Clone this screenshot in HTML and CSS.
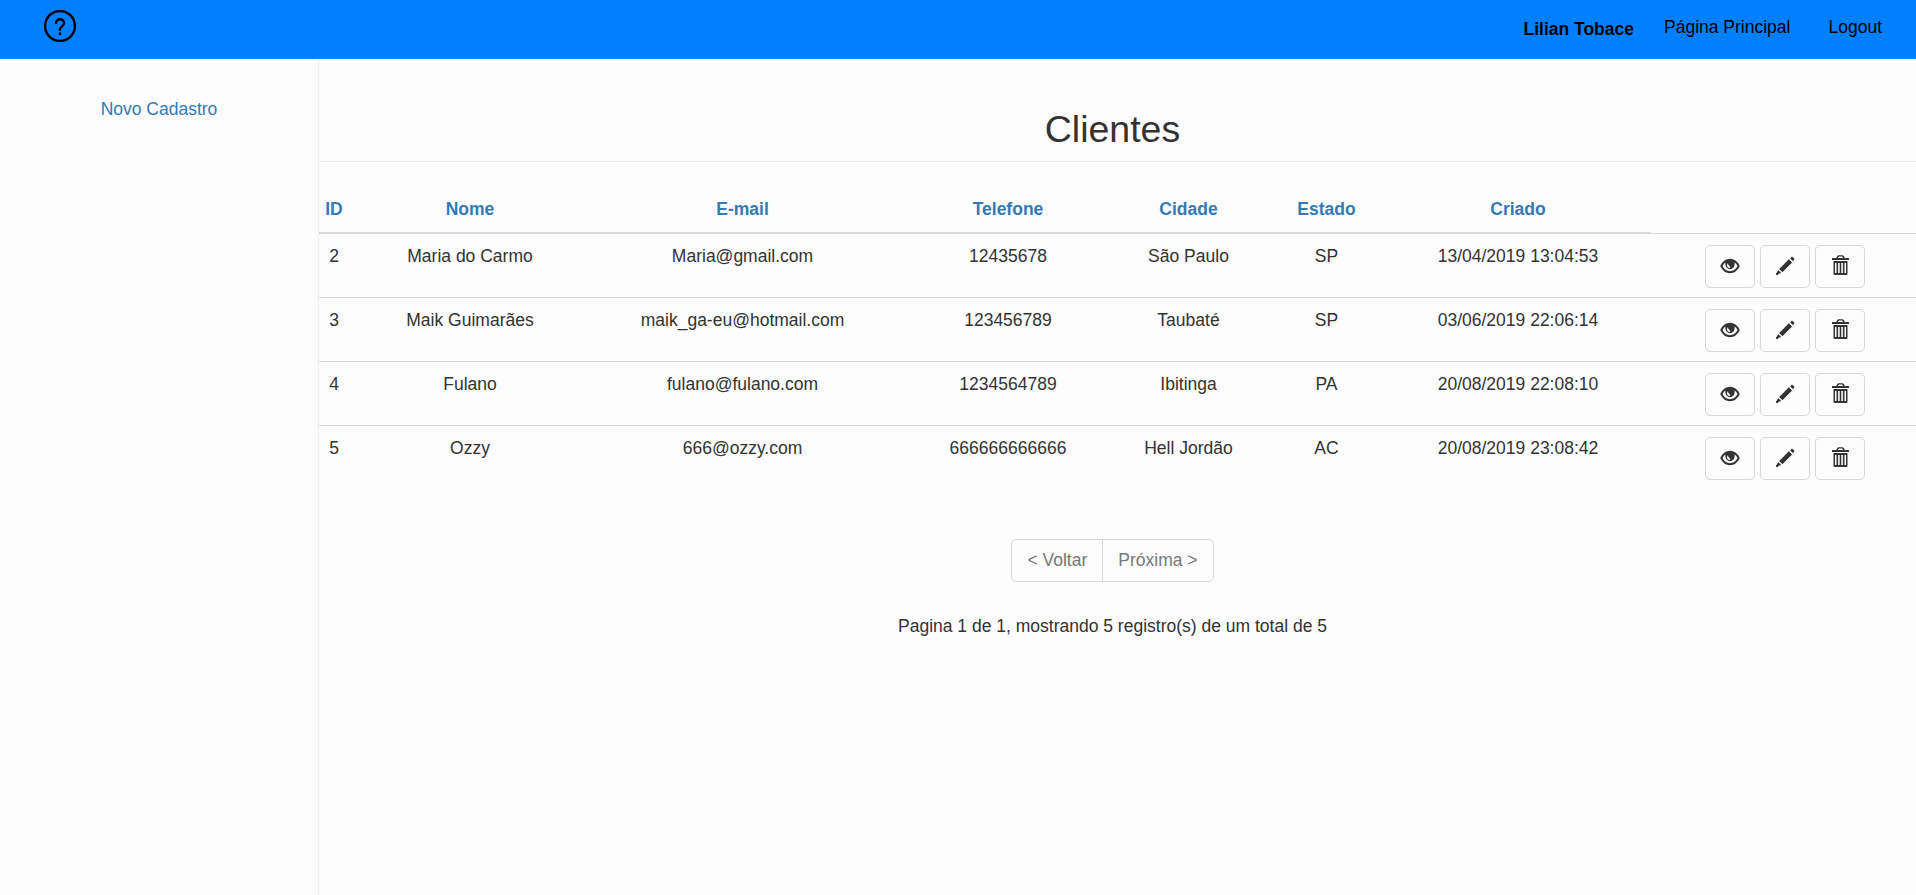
FILE: index.html
```
<!DOCTYPE html>
<html lang="pt-BR">
<head>
<meta charset="utf-8">
<title>Clientes</title>
<link rel="stylesheet" href="styles.css">
</head>
<body>
<svg class="sprite" aria-hidden="true">
  <symbol id="eye" viewBox="0 0 20 16"><path d="M1.300 8C3.300 4 6.300 1.700 10 1.700S16.700 4 18.700 8c-2 4-5 6.200-8.700 6.200S3.300 12 1.300 8z" fill="none" stroke="#333" stroke-width="1.900"/><path fill-rule="evenodd" d="M6 2.200h8A5 5 0 0 1 14.600 6.600 4.600 4.600 0 1 1 5.400 6.600 5 5 0 0 1 6 2.200zM7.500 5.200c-1 2.200-.3 4.200 1.500 4.700 1 .2 1.500-.6 1.100-1.300C9.300 7.600 8.400 7.200 7.500 5.200z"/></symbol>
  <symbol id="pencil" viewBox="0 0 20 20"><path d="M15.100 2.200 16.400 1q.7-.5 1.300.1l1.400 1.500q.5.700-.1 1.300L17.900 5.100zM13.900 3.300l3.200 3.200L7.400 16.200 4.200 13zM3.200 14l3 3-2.300.8L2.600 19H1v-1.600l1.200-1.300z"/></symbol>
  <symbol id="trash" viewBox="0 0 17 20"><path fill-rule="evenodd" d="M4.300 3Q4.900.3 6.500.3h4q1.600 0 2.200 2.700H17v2H0V3zM6 3h5L10.200 1.600H6.800zM1.500 6h14v12.800q0 1.200-1.200 1.200H2.700q-1.200 0-1.200-1.200zM3 8v10h1.500V8zm3.100 0v10h1.600V8zm3.200 0v10h1.600V8zm3.200 0v10H14V8z"/></symbol>
</svg>
<header class="navbar">
  <a class="help"><svg viewBox="0 0 32 32"><circle cx="16" cy="16" r="14.900"/><path d="M12 13.800C12 11 13.700 9.300 16 9.300s4.100 1.600 4.100 4c0 3.200-4.100 3-4.100 5.600v1.900"/><path d="M16 22.300v2.800"/></svg></a>
  <nav class="links">
    <strong class="user">Lilian Tobace</strong>
    <a class="home">Página Principal</a>
    <a>Logout</a>
  </nav>
</header>
<div class="page">
  <aside class="sidebar"><a>Novo Cadastro</a></aside>
  <main class="content">
    <h2>Clientes</h2>
    <table class="clients">
      <colgroup><col class="c-id"><col class="c-name"><col class="c-mail"><col class="c-phone"><col class="c-city"><col class="c-state"><col class="c-date"><col class="c-actions"></colgroup>
      <thead><tr><th>ID</th><th>Nome</th><th>E-mail</th><th>Telefone</th><th>Cidade</th><th>Estado</th><th class="date">Criado</th><td></td></tr></thead>
      <tbody>
        <tr><td>2</td><td>Maria do Carmo</td><td>Maria@gmail.com</td><td>12435678</td><td>São Paulo</td><td>SP</td><td class="date">13/04/2019 13:04:53</td><td><div class="actions"><a class="btn"><svg class="eye"><use href="#eye"/></svg></a><a class="btn"><svg class="pencil"><use href="#pencil"/></svg></a><a class="btn"><svg class="trash"><use href="#trash"/></svg></a></div></td></tr>
        <tr><td>3</td><td>Maik Guimarães</td><td>maik_ga-eu@hotmail.com</td><td>123456789</td><td>Taubaté</td><td>SP</td><td class="date">03/06/2019 22:06:14</td><td><div class="actions"><a class="btn"><svg class="eye"><use href="#eye"/></svg></a><a class="btn"><svg class="pencil"><use href="#pencil"/></svg></a><a class="btn"><svg class="trash"><use href="#trash"/></svg></a></div></td></tr>
        <tr><td>4</td><td>Fulano</td><td>fulano@fulano.com</td><td>1234564789</td><td>Ibitinga</td><td>PA</td><td class="date">20/08/2019 22:08:10</td><td><div class="actions"><a class="btn"><svg class="eye"><use href="#eye"/></svg></a><a class="btn"><svg class="pencil"><use href="#pencil"/></svg></a><a class="btn"><svg class="trash"><use href="#trash"/></svg></a></div></td></tr>
        <tr><td>5</td><td>Ozzy</td><td>666@ozzy.com</td><td>666666666666</td><td>Hell Jordão</td><td>AC</td><td class="date">20/08/2019 23:08:42</td><td><div class="actions"><a class="btn"><svg class="eye"><use href="#eye"/></svg></a><a class="btn"><svg class="pencil"><use href="#pencil"/></svg></a><a class="btn"><svg class="trash"><use href="#trash"/></svg></a></div></td></tr>
      </tbody>
    </table>
    <div class="footer">
      <div class="pagination"><a>&lt; Voltar</a><a>Próxima &gt;</a></div>
      <p class="summary">Pagina 1 de 1, mostrando 5 registro(s) de um total de 5</p>
    </div>
  </main>
</div>
</body>
</html>
```
FILE: styles.css
```
* { box-sizing: border-box; }
body {
  margin: 0;
  background: #fcfcfc;
  color: #333;
  font: 17.5px/25px "Liberation Sans", Arial, sans-serif;
}
.sprite { display: none; }
.navbar {
  display: flex;
  justify-content: space-between;
  align-items: flex-start;
  height: 59px;
  padding: 10px 34px 0 44px;
  background: #0080ff;
  color: #000;
}
.help svg { display: block; width: 32px; height: 32px; fill: none; stroke: #000; stroke-width: 2.4; }
.links { display: flex; padding-top: 5px; }
.user { margin: 2px 30px 0 0; }
.home { margin-right: 38px; }
.page { display: flex; height: 836px; padding-top: 1px; }
.sidebar {
  width: 319px;
  padding-top: 37px;
  border-right: 1px solid #eee;
  text-align: center;
  color: #337ab7;
}
.content { flex: 1; text-align: center; }
h2 {
  height: 102px;
  margin: 0 0 25px;
  padding: 49px 10px 0 0;
  border-bottom: 1px solid #eee;
  font-size: 37.5px;
  line-height: 41px;
  font-weight: 500;
}
.clients { width: 1597px; table-layout: fixed; border-collapse: separate; border-spacing: 0; }
.c-id { width: 30px; }
.c-name { width: 242px; }
.c-mail { width: 303px; }
.c-phone { width: 228px; }
.c-city { width: 133px; }
.c-state { width: 143px; }
.c-date { width: 253px; }
.c-actions { width: 265px; }
th, td { padding: 0; vertical-align: top; }
th {
  height: 47px;
  padding-top: 10px;
  border-bottom: 2px solid #d9d9d9;
  color: #337ab7;
}
thead td { border-bottom: 1px solid #d9d9d9; }
tbody td { height: 64px; padding-top: 10px; border-bottom: 1px solid #d9d9d9; }
tbody tr:last-child td { border-bottom: 0; }
.clients .date { padding-right: 13px; }
.actions { display: flex; justify-content: center; gap: 5px; padding: 1px 0 0 3px; }
.btn {
  display: flex;
  justify-content: center;
  align-items: center;
  width: 50px;
  height: 43px;
  border: 1px solid #d7d7d7;
  border-radius: 5px;
}
.btn svg { fill: #333; }
.eye { width: 20px; height: 16px; margin-bottom: 1px; }
.pencil { width: 20px; height: 20px; margin-bottom: 1px; }
.trash { width: 17px; height: 20px; margin-bottom: 3px; }
.footer { padding-right: 10px; }
.pagination {
  display: inline-flex;
  height: 43px;
  margin-top: 49px;
  border: 1px solid #d9d9d9;
  border-radius: 5px;
  color: #777;
}
.pagination a { padding: 8px 15px; }
.pagination a + a { border-left: 1px solid #d9d9d9; }
.summary { margin: 32px 0 0; }
```
